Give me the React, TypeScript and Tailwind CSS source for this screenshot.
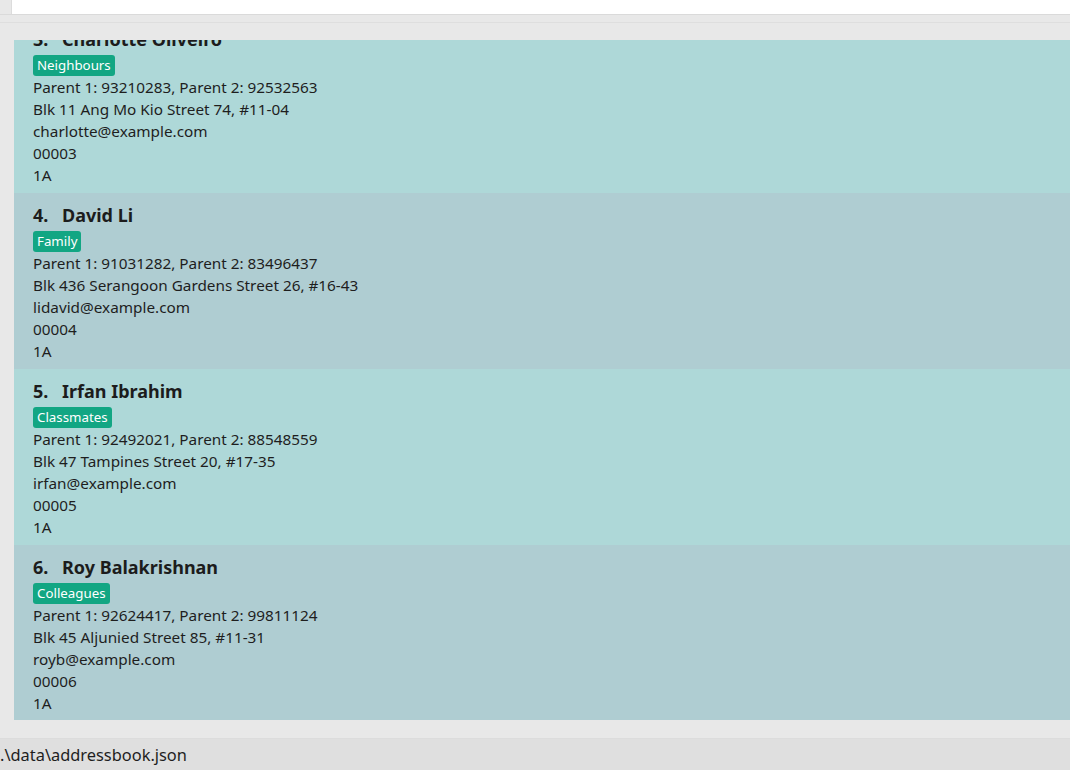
import React from "react";

const PEOPLE = [
  { num: 3, name: "Charlotte Oliveiro", tag: "Neighbours", phones: "Parent 1: 93210283, Parent 2: 92532563", addr: "Blk 11 Ang Mo Kio Street 74, #11-04", email: "charlotte@example.com", id: "00003", cls: "1A" },
  { num: 4, name: "David Li", tag: "Family", phones: "Parent 1: 91031282, Parent 2: 83496437", addr: "Blk 436 Serangoon Gardens Street 26, #16-43", email: "lidavid@example.com", id: "00004", cls: "1A" },
  { num: 5, name: "Irfan Ibrahim", tag: "Classmates", phones: "Parent 1: 92492021, Parent 2: 88548559", addr: "Blk 47 Tampines Street 20, #17-35", email: "irfan@example.com", id: "00005", cls: "1A" },
  { num: 6, name: "Roy Balakrishnan", tag: "Colleagues", phones: "Parent 1: 92624417, Parent 2: 99811124", addr: "Blk 45 Aljunied Street 85, #11-31", email: "royb@example.com", id: "00006", cls: "1A" },
];

function PersonCard({ p }: { p: (typeof PEOPLE)[number] }) {
  const even = p.num % 2 === 0;
  return (
    <div className={`h-[176px] pl-[19px] pt-[11px] ${even ? "bg-[#afcdd2]" : "bg-[#aed8d8]"}`}>
      <div className="flex h-[22px] items-center text-[18px] font-bold leading-[22px] text-[#1c1c1c]">
        <span className="w-[29px]">{p.num}.</span>
        <span>{p.name}</span>
      </div>
      <div className="mt-[5px] flex h-[21px]">
        <span className="rounded-[3px] bg-[#12a683] px-[4px] text-[13.3px] leading-[21px] text-white">{p.tag}</span>
      </div>
      <div className="text-[15.3px] leading-[22px] text-[#1e1e1e]">
        <div>{p.phones}</div>
        <div>{p.addr}</div>
        <div>{p.email}</div>
        <div>{p.id}</div>
        <div>{p.cls}</div>
      </div>
    </div>
  );
}

export default function App() {
  return (
    <div className="flex h-[770px] w-[1070px] flex-col overflow-hidden bg-[#e8e8e8] font-['Noto_Sans',sans-serif]">
      <div className="h-[15px] border-b border-[#dadada] pl-[11px]">
        <div className="h-[14px] border-l border-[#dcdcdc] bg-white" />
      </div>
      <div className="h-[8px] border-b border-[#dedede]" />
      <div className="flex-1 pb-[17px] pl-[14px] pt-[17px]">
        <div className="h-[680px] overflow-hidden">
          <div className="-mt-[23px]">
            {PEOPLE.map((p) => (
              <PersonCard key={p.num} p={p} />
            ))}
          </div>
        </div>
      </div>
      <div className="h-[32px] border-t border-[#dcdcdc] bg-[#dfdfdf] text-[16.4px] leading-[31px] text-[#1e1e1e]">
        .\data\addressbook.json
      </div>
    </div>
  );
}
